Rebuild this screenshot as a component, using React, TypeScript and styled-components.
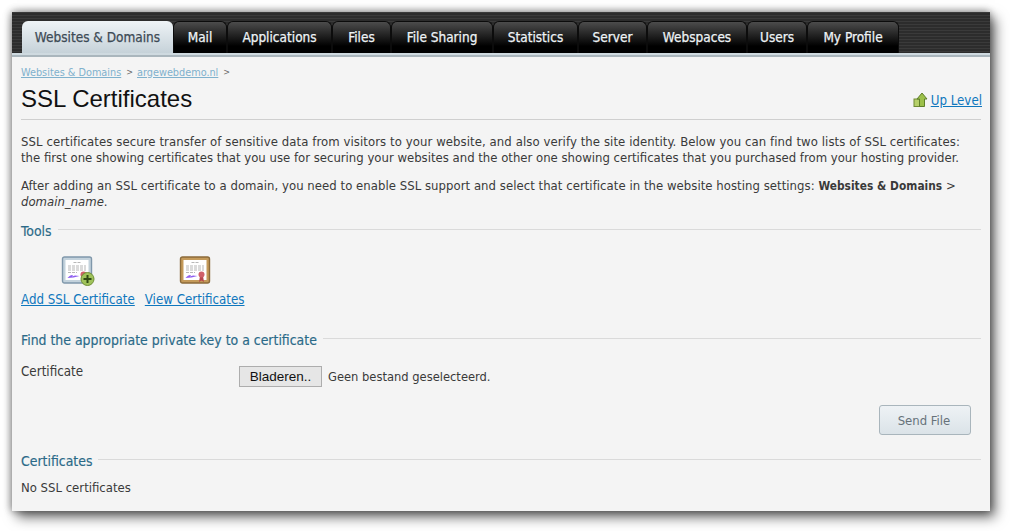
import React from "react";
import styled, { createGlobalStyle } from "styled-components";

const Global = createGlobalStyle`
  html, body { margin: 0; padding: 0; background: #fff; }
  body { width: 1010px; height: 531px; overflow: hidden; font-family: "DejaVu Sans Condensed", "DejaVu Sans", sans-serif; font-size: 13px; color: #3a3a3a; }
`;
const Page = styled.div`padding: 12px 20px 20px 12px;`;
const Win = styled.div`
  width: 978px; height: 499px; background: #f4f4f4;
  box-shadow: 5px 6px 12px rgba(0,0,0,.6), -1px 0 8px rgba(0,0,0,.28), 0 -1px 8px rgba(0,0,0,.2);
  display: flex; flex-direction: column;
`;
const TopBar = styled.nav`
  height: 41px; box-sizing: border-box; padding: 9px 0 0 10px; display: flex; flex: none;
  background: repeating-linear-gradient(#3a3a3a 0 1px, #2c2c2c 1px 3px);
`;
const Tab = styled.a<{ $active?: boolean; $w: number }>`
  width: ${p => p.$w}px; height: 32px; box-sizing: border-box; display: flex; align-items: center; justify-content: center;
  border-radius: 6px 6px 0 0; font-size: 13.5px; padding-bottom: 1px; -webkit-text-stroke: .25px currentColor;
  color: ${p => (p.$active ? "#3d4a55" : "#eef3f6")};
  background: ${p => (p.$active ? "linear-gradient(#eef3f6,#c6d2d9)" : "linear-gradient(#4c4c4c,#000 78%)")};
  border: ${p => (p.$active ? "0" : "1px solid #0c0c0c")};
  border-bottom: 0;
`;
const Strip = styled.div`height: 4px; flex: none; background: #cfdae0; border-bottom: 2px solid #aab6bd; box-sizing: border-box;`;
const Main = styled.main`padding: 6px 9px 0 9px; flex: 1;`;
const Crumbs = styled.div`font-size: 10.8px; color: #666; display: flex; height: 18px; align-items: center;`;
const Crumb = styled.a`color: #7fb1cd; text-decoration: underline;`;
const Sep = styled.span`font-size: 9px; margin: 0 4px 0 5px;`;
const Heading = styled.div`
  display: flex; justify-content: space-between; align-items: flex-end; height: 39px; box-sizing: border-box;
  border-bottom: 1px solid #cfcfcf; padding-bottom: 5px;
`;
const Title = styled.h1`margin: 0; font: 400 24px/30px "Liberation Sans", Arial, sans-serif; color: #111;`;
const UpLevel = styled.a`display: flex; align-items: center; gap: 3px; color: #0f77bd; text-decoration: underline; font-size: 13.2px; margin: 0 -1px 6px 0;`;
const Para = styled.p<{ $leading: number }>`margin: 0 0 12px; font-size: 13px; line-height: ${p => p.$leading}px; white-space: nowrap;`;
const Line = styled.span<{ $spread?: number }>`display: block; letter-spacing: ${p => p.$spread ?? 0}px;`;
const Strong = styled.b`font-size: 11.8px;`;
const Intro = styled.div`padding-top: 14px;`;
const Legend = styled.div<{ $gap: number }>`
  display: flex; align-items: center; gap: 6px; font-size: 13.9px; color: #2b6a88; height: 16px; margin-top: ${p => p.$gap}px;
  -webkit-text-stroke: .15px currentColor;
  &::after { content: ""; flex: 1; height: 1px; background: #dadada; margin-top: -4px; }
`;
const Tools = styled.div`display: flex; gap: 10px; margin-top: 17px;`;
const Tool = styled.a`display: flex; flex-direction: column; align-items: center; gap: 6px; color: #0f77bd; font-size: 13.2px; text-decoration: underline;`;
const FormRow = styled.div`display: flex; margin-top: 16px; height: 20px;`;
const Label = styled.div`width: 218px; font-size: 13.3px; line-height: 15px;`;
const FileBtn = styled.button`
  width: 83px; height: 21px; padding: 0; border: 1px solid #adadad; background: #e6e6e6; color: #111;
  font: 13.5px "Liberation Sans", Arial, sans-serif; margin-top: 2px;
`;
const FileText = styled.span`margin-left: 6px; font-size: 12.8px; line-height: 20px; padding-top: 3px;`;
const Actions = styled.div`display: flex; justify-content: flex-end; padding-right: 10px; margin-top: 21px;`;
const SendBtn = styled.button`
  width: 92px; height: 30px; padding: 0 2px 0 0; border: 1px solid #a9b5bc; border-radius: 3px; color: #66727a;
  background: linear-gradient(#eef2f5,#dbe3e8); font: 13px "DejaVu Sans Condensed", "DejaVu Sans", sans-serif;
`;
const Empty = styled.div`margin-top: 11px; font-size: 13px; line-height: 15px;`;

const Cert = ({ frame, mat, plus }: { frame: string; mat: string; plus?: boolean }) => (
  <svg width="34" height="30" viewBox="0 0 34 30">
    <g transform={plus ? undefined : "translate(1 0)"}>
      <rect x="1.500" y="1" width="29" height="26" rx="2" fill={mat} stroke={frame} strokeWidth="1.400" />
      <rect x="4.500" y="4" width="23" height="20" fill="#fff" />
      <g stroke="#9a9a9a" strokeWidth=".7" strokeDasharray="3 1">
        <path d="M12.500 6.500h7M7 10h18M7 12h18M7 14h18M7 16.500h9" />
      </g>
      <path d="M6.500 22c2-2.500 4-3.500 5.500-3l-1 1.500 3-1 4.500.5-6 1.500z" fill="#8f5ff0" />
      {!plus && <path d="M21 20l-1 6 2.500-1.500L25 26l-1-6z" fill="#b8484f" />}
      <circle cx="22.500" cy="18.500" r="3" fill="#d0606a" />
    </g>
    {plus && (
      <g>
        <circle cx="26.500" cy="23" r="6.500" fill="#9fc25a" stroke="#6f8f35" />
        <path d="M26.500 19v8M22.500 23h8" stroke="#2f4a14" strokeWidth="2" />
      </g>
    )}
  </svg>
);

const tabs: [string, number][] = [
  ["Mail", 54], ["Applications", 105], ["Files", 59], ["File Sharing", 102], ["Statistics", 85],
  ["Server", 69], ["Webspaces", 100], ["Users", 60], ["My Profile", 92],
];

export default function App() {
  return (
    <Page>
      <Global />
      <Win>
        <TopBar>
          <Tab $active $w={151}>Websites &amp; Domains</Tab>
          {tabs.map(([t, w]) => <Tab key={t} $w={w}>{t}</Tab>)}
        </TopBar>
        <Strip />
        <Main>
          <Crumbs>
            <Crumb>Websites &amp; Domains</Crumb><Sep>&gt;</Sep><Crumb>argewebdemo.nl</Crumb><Sep>&gt;</Sep>
          </Crumbs>
          <Heading>
            <Title>SSL Certificates</Title>
            <UpLevel>
              <svg width="15" height="16" viewBox="0 0 15 16">
                <rect x="1" y="7" width="5.500" height="7.500" fill="#b6d06a" stroke="#6f8a35" />
                <path d="M9 1l5 6h-2.500v7.500H6.500V7H4z" fill="#9cc04a" stroke="#5f7f2a" />
              </svg>
              Up Level
            </UpLevel>
          </Heading>
          <Intro>
            <Para $leading={16}>
              <Line $spread={0.08}>SSL certificates secure transfer of sensitive data from visitors to your website, and also verify the site identity. Below you can find two lists of SSL certificates:</Line>
              <Line>the first one showing certificates that you use for securing your websites and the other one showing certificates that you purchased from your hosting provider.</Line>
            </Para>
            <Para $leading={15}>
              <Line $spread={0.04}>After adding an SSL certificate to a domain, you need to enable SSL support and select that certificate in the website hosting settings: <Strong>Websites &amp; Domains</Strong> &gt;</Line>
              <Line><i>domain_name</i>.</Line>
            </Para>
          </Intro>
          <Legend $gap={14}>Tools</Legend>
          <Tools>
            <Tool><Cert frame="#7f97aa" mat="#c3d2dc" plus />Add SSL Certificate</Tool>
            <Tool><Cert frame="#8a6a3a" mat="#c49a5a" />View Certificates</Tool>
          </Tools>
          <Legend $gap={25}>Find the appropriate private key to a certificate</Legend>
          <FormRow>
            <Label>Certificate</Label>
            <FileBtn>Bladeren..</FileBtn>
            <FileText>Geen bestand geselecteerd.</FileText>
          </FormRow>
          <Actions><SendBtn>Send File</SendBtn></Actions>
          <Legend $gap={18}>Certificates</Legend>
          <Empty>No SSL certificates</Empty>
        </Main>
      </Win>
    </Page>
  );
}
